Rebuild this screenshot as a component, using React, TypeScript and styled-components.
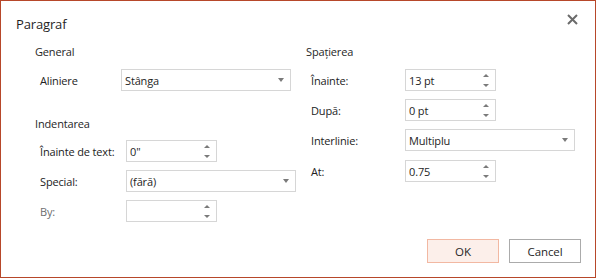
import React from 'react';
import styled, { createGlobalStyle } from 'styled-components';

const GlobalStyle = createGlobalStyle`
  html, body { margin: 0; padding: 0; background: #fff; }
  body { font-family: "Open Sans", "Segoe UI", sans-serif; }
  * { box-sizing: border-box; }
`;

const Dialog = styled.div`
  width: 596px;
  height: 278px;
  border: 1px solid #b7472a;
  background: #fff;
  display: flex;
  flex-direction: column;
  color: #262626;
  font-size: 11px;
  letter-spacing: -0.15px;
`;

const TitleBar = styled.div`
  height: 41px;
  display: flex;
  align-items: flex-start;
  justify-content: space-between;
  padding: 13px 15px 0 15px;
`;

const Title = styled.div`
  font-size: 13px;
  line-height: 20px;
  color: #1f1f1f;
`;

const Close = styled.button`
  width: 16px;
  height: 16px;
  margin-top: -3px;
  padding: 0;
  border: none;
  background: transparent;
  display: flex;
  align-items: center;
  justify-content: center;
`;

const Body = styled.div`
  flex: 1;
  display: flex;
  padding-left: 34px;
`;

const Column = styled.div<{ $width?: number }>`
  display: flex;
  flex-direction: column;
  width: ${p => (p.$width ? `${p.$width}px` : 'auto')};
  flex: ${p => (p.$width ? 'none' : '1')};
`;

const SectionTitle = styled.div<{ $mt?: number }>`
  line-height: 20px;
  height: 20px;
  margin-top: ${p => p.$mt ?? 0}px;
`;

const Row = styled.div<{ $mt: number }>`
  display: flex;
  align-items: center;
  height: 22px;
  margin-top: ${p => p.$mt}px;
`;

const Label = styled.div<{ $width: number; $disabled?: boolean }>`
  width: ${p => p.$width}px;
  padding-left: 5px;
  flex: none;
  color: ${p => (p.$disabled ? '#6e6e6e' : '#222')};
`;

const Field = styled.div<{ $width: number }>`
  width: ${p => p.$width}px;
  height: 22px;
  border: 1px solid #d6d6d6;
  background: #fff;
  display: flex;
  align-items: center;
  padding-left: 3px;
  padding-right: 6px;
  color: #1e1e1e;
`;

const Value = styled.span`
  flex: 1;
  white-space: nowrap;
`;

const DropArrow = styled.span`
  width: 0;
  height: 0;
  border-left: 3.5px solid transparent;
  border-right: 3.5px solid transparent;
  border-top: 4px solid #7a7a7a;
`;

const Spinner = styled.span`
  display: flex;
  flex-direction: column;
  gap: 7px;
`;

const Tri = styled.span<{ $up?: boolean }>`
  width: 0;
  height: 0;
  border-left: 3px solid transparent;
  border-right: 3px solid transparent;
  ${p => (p.$up ? 'border-bottom: 3px solid #7a7a7a;' : 'border-top: 3px solid #7a7a7a;')}
`;

const Footer = styled.div`
  display: flex;
  justify-content: flex-end;
  gap: 10px;
  padding: 0 14px 14px 0;
`;

const Button = styled.button<{ $primary?: boolean }>`
  width: 72px;
  height: 24px;
  font-family: inherit;
  font-size: 11.5px;
  letter-spacing: -0.1px;
  color: #262626;
  background: ${p => (p.$primary ? '#fcefea' : '#fff')};
  border: 1px solid ${p => (p.$primary ? '#f2b8a2' : '#ababab')};
  padding: 0;
`;

const Select = ({ value, width }: { value: string; width: number }) => (
  <Field $width={width}>
    <Value>{value}</Value>
    <DropArrow />
  </Field>
);

const Spin = ({ value, width }: { value: string; width: number }) => (
  <Field $width={width}>
    <Value>{value}</Value>
    <Spinner>
      <Tri $up />
      <Tri />
    </Spinner>
  </Field>
);

export default function App() {
  return (
    <>
      <GlobalStyle />
      <Dialog>
        <TitleBar>
          <Title>Paragraf</Title>
          <Close aria-label="Închide">
            <svg width="11" height="11" viewBox="0 0 11 11">
              <path d="M1 1L10 10M10 1L1 10" stroke="#6b6b6b" strokeWidth="2" />
            </svg>
          </Close>
        </TitleBar>
        <Body>
          <Column $width={271}>
            <SectionTitle>General</SectionTitle>
            <Row $mt={7}>
              <Label $width={86}>Aliniere</Label>
              <Select value="Stânga" width={170} />
            </Row>
            <SectionTitle $mt={23}>Indentarea</SectionTitle>
            <Row $mt={6}>
              <Label $width={91}>Înainte de text:</Label>
              <Spin value={'0"'} width={91} />
            </Row>
            <Row $mt={8}>
              <Label $width={91}>Special:</Label>
              <Select value="(fără)" width={170} />
            </Row>
            <Row $mt={8}>
              <Label $width={91} $disabled>By:</Label>
              <Spin value="" width={91} />
            </Row>
          </Column>
          <Column>
            <SectionTitle>Spațierea</SectionTitle>
            <Row $mt={7}>
              <Label $width={99}>Înainte:</Label>
              <Spin value="13 pt" width={91} />
            </Row>
            <Row $mt={8}>
              <Label $width={99}>După:</Label>
              <Spin value="0 pt" width={91} />
            </Row>
            <Row $mt={8}>
              <Label $width={99}>Interlinie:</Label>
              <Select value="Multiplu" width={170} />
            </Row>
            <Row $mt={9}>
              <Label $width={99}>At:</Label>
              <Spin value="0.75" width={91} />
            </Row>
          </Column>
        </Body>
        <Footer>
          <Button $primary>OK</Button>
          <Button>Cancel</Button>
        </Footer>
      </Dialog>
    </>
  );
}
